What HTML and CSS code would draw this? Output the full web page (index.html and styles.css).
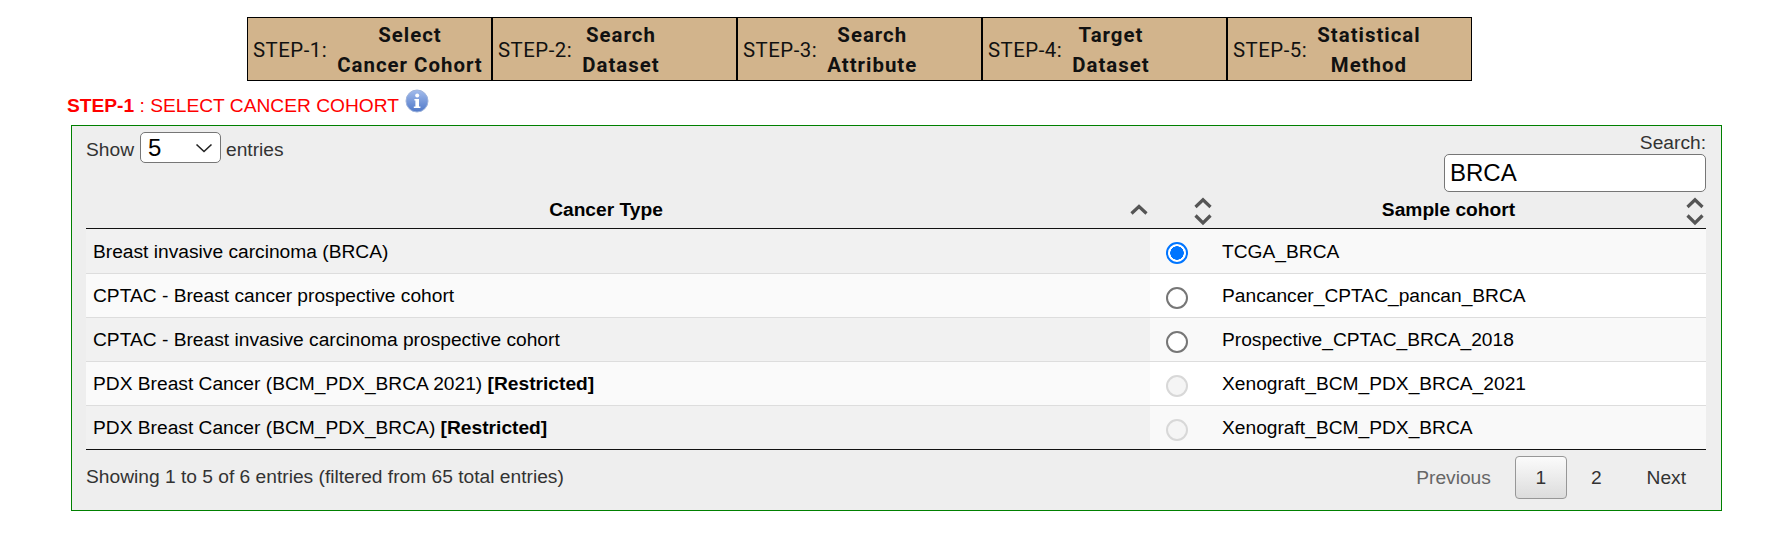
FILE: index.html
```html
<!DOCTYPE html>
<html lang="en">
<head>
<meta charset="utf-8">
<title>Select Cancer Cohort</title>
<link rel="stylesheet" href="styles.css">
</head>
<body>
<nav class="steps">
  <div class="step"><span class="step-no">STEP-1:</span><span class="step-label">Select<br>Cancer Cohort</span></div>
  <div class="step"><span class="step-no">STEP-2:</span><span class="step-label">Search<br>Dataset</span></div>
  <div class="step"><span class="step-no">STEP-3:</span><span class="step-label">Search<br>Attribute</span></div>
  <div class="step"><span class="step-no">STEP-4:</span><span class="step-label">Target<br>Dataset</span></div>
  <div class="step"><span class="step-no">STEP-5:</span><span class="step-label">Statistical<br>Method</span></div>
</nav>
<h2 class="heading"><span><b>STEP-1</b> : SELECT CANCER COHORT</span><svg class="info" viewBox="0 0 24 24" width="24" height="24" aria-hidden="true">
    <defs><linearGradient id="ig" x1="0" y1="0" x2="0" y2="1"><stop offset="0" stop-color="#a3bcec"/><stop offset="1" stop-color="#4f78c8"/></linearGradient></defs>
    <circle cx="12" cy="12" r="11" fill="url(#ig)" stroke="#9fb4dc" stroke-width="1"/>
    <circle cx="12.2" cy="6.6" r="2" fill="#fff"/>
    <path d="M9.4 10h4.6v7.4h1.4v1.6H8.8v-1.6h1.6v-5.8h-1z" fill="#fff"/>
  </svg></h2>
<section class="panel">
  <div class="controls">
    <div class="length"><span>Show</span><span class="select"><span class="select-value">5</span>
      <svg viewBox="0 0 18 10" width="18" height="10" aria-hidden="true"><path d="M1.5 1.5 9 8.5l7.5-7" fill="none" stroke="#222" stroke-width="1.6"/></svg>
    </span><span class="entries">entries</span></div>
    <label class="search">Search:<input type="text" value="BRCA"></label>
  </div>
  <table class="cohorts">
    <thead>
      <tr>
        <th class="col-type"><div class="th"><span class="th-text">Cancer Type</span>
          <svg class="sort" viewBox="0 0 20 30" width="20" height="30" aria-hidden="true"><path d="M2.5 16.5 10 9.5l7.5 7" fill="none" stroke="#555" stroke-width="3.2"/></svg></div></th>
        <th class="col-radio"><div class="th"><svg class="sort" viewBox="0 0 20 30" width="20" height="30" aria-hidden="true"><path d="M2.5 10 10 2.8l7.5 7.2M2.5 18.5 10 26l7.5-7.5" fill="none" stroke="#555" stroke-width="3.2"/></svg></div></th>
        <th class="col-sample"><div class="th"><span class="th-text">Sample cohort</span>
          <svg class="sort" viewBox="0 0 20 30" width="20" height="30" aria-hidden="true"><path d="M2.5 10 10 2.8l7.5 7.2M2.5 18.5 10 26l7.5-7.5" fill="none" stroke="#555" stroke-width="3.2"/></svg></div></th>
      </tr>
    </thead>
    <tbody>
      <tr><td class="sorted">Breast invasive carcinoma (BRCA)</td><td class="cell-radio"><input type="radio" name="c" checked></td><td>TCGA_BRCA</td></tr>
      <tr><td class="sorted">CPTAC - Breast cancer prospective cohort</td><td class="cell-radio"><input type="radio" name="c"></td><td>Pancancer_CPTAC_pancan_BRCA</td></tr>
      <tr><td class="sorted">CPTAC - Breast invasive carcinoma prospective cohort</td><td class="cell-radio"><input type="radio" name="c"></td><td>Prospective_CPTAC_BRCA_2018</td></tr>
      <tr><td class="sorted">PDX Breast Cancer (BCM_PDX_BRCA 2021) <b>[Restricted]</b></td><td class="cell-radio"><input type="radio" name="c" disabled></td><td>Xenograft_BCM_PDX_BRCA_2021</td></tr>
      <tr><td class="sorted">PDX Breast Cancer (BCM_PDX_BRCA) <b>[Restricted]</b></td><td class="cell-radio"><input type="radio" name="c" disabled></td><td>Xenograft_BCM_PDX_BRCA</td></tr>
    </tbody>
  </table>
  <div class="footer">
    <div class="info-text">Showing 1 to 5 of 6 entries (filtered from 65 total entries)</div>
    <div class="pager"><span class="page disabled">Previous</span><span class="page current">1</span><span class="page">2</span><span class="page">Next</span></div>
  </div>
</section>
</body>
</html>
```
FILE: styles.css
```css
* { box-sizing: border-box; }
html, body { margin: 0; padding: 0; background: #fff; }
body { font-family: "Liberation Sans", Arial, sans-serif; font-size: 19.2px; color: #000; height: 540px; overflow: hidden; }

.steps { display: flex; width: 1225px; height: 64px; margin: 17px 0 0 247px; border: 1px solid #000; background: #d2b48c; font-family: Roboto, sans-serif; font-size: 20.4px; }
.step { flex: 1 1 0; display: flex; align-items: center; gap: 10px; padding: 2px 0 0 5px; border-right: 2px solid #000; color: #111; }
.step:last-child { border-right: 0; }
.step-no { letter-spacing: 0.5px; }
.step-label { font-weight: 700; line-height: 30px; text-align: center; letter-spacing: 1px; }

.heading { margin: 10px 0 0 67px; height: 34px; display: flex; align-items: flex-start; font-size: 19.2px; font-weight: 400; color: #f00; line-height: 30px; }
.heading b { font-weight: 700; }
.info { margin: -2px 0 0 6px; }

.panel { margin: 0 54px 0 71px; height: 386px; border: 1px solid #008000; background: #eee; padding: 6px 15px 0 14px; color: #333; }
.controls { display: flex; justify-content: space-between; height: 65px; }
.length { display: flex; align-items: flex-start; line-height: 35px; gap: 6px; }
.entries { margin-left: -1px; }
.select { width: 81px; height: 31px; display: flex; align-items: center; justify-content: space-between; padding: 0 7px; border: 1px solid #767676; border-radius: 5px; background: #fff; color: #000; font-size: 24px; line-height: 29px; }
.search { display: flex; flex-direction: column; align-items: flex-end; line-height: 22px; }
.search input { width: 262px; height: 38px; margin-top: 0; padding: 0 5px; border: 1px solid #767676; border-radius: 5px; background: #fff; color: #000; font: 24px "Liberation Sans", Arial, sans-serif; outline: 0; }

.cohorts { width: 100%; table-layout: fixed; border-collapse: collapse; color: #000; }
.cohorts th { height: 31px; padding: 0; border-bottom: 1px solid #111; font-weight: 700; }
.th { display: flex; align-items: center; justify-content: flex-end; height: 30px; }
.th-text { flex: 1; text-align: center; padding-bottom: 5px; }
.sort { flex: none; margin-right: 1px; }
.col-type { width: 1064px; }
.col-type .th { padding-left: 10px; }
.col-type .th-text { padding-right: 13px; }
.col-radio { width: 64px; }
.col-sample .th { padding-left: 10px; }
.col-sample .th-text { padding-right: 12px; }
.cohorts td { height: 44px; padding: 2px 10px 0 7px; border-bottom: 1px solid #ddd; background: #fff; }
.cohorts tbody tr:first-child td { height: 45px; }
.cohorts tr:nth-child(odd) td { background: #f9f9f9; }
.cohorts td.sorted { background: #fafafa; }
.cohorts tr:nth-child(odd) td.sorted { background: #f1f1f1; }
.cohorts tbody tr:last-child td { border-bottom: 1px solid #111; }
.cohorts td:last-child { padding-left: 8px; }
.cohorts td.cell-radio { padding: 5px 0 0 16px; }

input[type="radio"] { appearance: none; display: block; width: 22px; height: 22px; margin: 0; border: 2px solid #767676; border-radius: 50%; background: #fff; }
input[type="radio"]:checked { border-color: #0075ff; background: radial-gradient(circle, #0075ff 0 6.5px, #fff 7px); }
input[type="radio"]:disabled { border-color: #d8d8d8; background: #f5f5f5; }

.footer { display: flex; justify-content: space-between; padding-top: 6px; color: #333; }
.info-text { line-height: 41px; }
.pager { display: flex; align-items: stretch; gap: 3px; height: 43px; }
.page { display: flex; align-items: center; padding: 2px 20px 0; border: 1px solid transparent; border-radius: 4px; }
.page:last-child { padding-right: 19px; }
.page.disabled { color: #666; }
.page.current { width: 52px; padding: 2px 0 0; justify-content: center; border-color: #979797; background: linear-gradient(#fbfbfb, #dcdcdc); }
```
